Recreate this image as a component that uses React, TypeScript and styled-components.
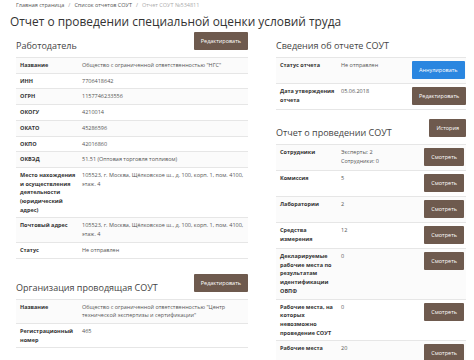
import styled, { createGlobalStyle } from 'styled-components';

const GlobalStyle = createGlobalStyle`
  body {
    margin: 0;
    background: #ffffff;
    font-family: 'Open Sans', 'Liberation Sans', sans-serif;
    color: #333;
    overflow: hidden;
  }
`;

const Page = styled.div`
  padding: 1px 8px 0 10px;
`;

const Breadcrumb = styled.div`
  display: flex;
  gap: 4px;
  padding-left: 6px;
  font-size: 5.5px;
  line-height: 8px;
  color: #999;
`;

const Crumb = styled.span<{ $active?: boolean }>`
  color: ${p => (p.$active ? '#aaa' : '#555')};
`;

const Title = styled.h1`
  margin: 5px 0 0;
  font-size: 11.9px;
  line-height: 15px;
  font-weight: 400;
  color: #333;
`;

const Columns = styled.div`
  display: grid;
  grid-template-columns: 232px 190px;
  column-gap: 28px;
  align-items: start;
  padding-left: 6px;
  margin-top: 3px;
`;

const Column = styled.div`
  display: flex;
  flex-direction: column;
`;

const Section = styled.section<{ $gap?: number }>`
  margin-top: ${p => p.$gap ?? 0}px;
`;

const SectionHeader = styled.div`
  display: flex;
  justify-content: space-between;
  align-items: flex-start;
  padding-bottom: 5px;
  min-height: 25px;
  box-sizing: border-box;
`;

const Heading = styled.h2`
  margin: 0;
  padding-top: 8px;
  font-size: 9px;
  line-height: 12px;
  font-weight: 400;
  color: #444;
`;

const Button = styled.button<{ $blue?: boolean }>`
  height: 18px;
  padding: 0 7px;
  border: none;
  border-radius: 1px;
  background: ${p => (p.$blue ? '#2a86e0' : '#6e5a4e')};
  color: #fff;
  font-family: inherit;
  font-size: 5.5px;
  white-space: nowrap;
  cursor: pointer;
`;

const Table = styled.table`
  width: 100%;
  border-collapse: collapse;
  table-layout: fixed;
  font-size: 5.5px;
  line-height: 8.7px;
  tr:nth-child(odd) {
    background: #fbfbfb;
  }
`;

const Row = styled.tr`
  border-top: 1px solid #e6e6e6;
  &:last-child {
    border-bottom: 1px solid #e6e6e6;
  }
`;

const Label = styled.th<{ $width: number }>`
  box-sizing: border-box;
  width: ${p => p.$width}px;
  padding: 3px 1px 3px 4px;
  text-align: left;
  vertical-align: top;
  font-weight: 700;
  color: #333;
`;

const Value = styled.td`
  padding: 3px 4px 3px 4px;
  vertical-align: top;
  color: #555;
`;

const ActionCell = styled.td`
  width: 52px;
  padding: 3px 2px 4px 0;
  text-align: right;
  vertical-align: top;
`;

const employer: [string, string][] = [
  ['Название', 'Общество с ограниченной ответственностью "НГС"'],
  ['ИНН', '7706418642'],
  ['ОГРН', '1157746233556'],
  ['ОКОГУ', '4210014'],
  ['ОКАТО', '45286596'],
  ['ОКПО', '42016860'],
  ['ОКВЭД', '51.51 (Оптовая торговля топливом)'],
  ['Место нахождения и осуществления деятельности (юридический адрес)', '105523, г. Москва, Щёлковское ш., д. 100, корп. 1, пом. 4100, этаж. 4'],
  ['Почтовый адрес', '105523, г. Москва, Щёлковское ш., д. 100, корп. 1, пом. 4100, этаж. 4'],
  ['Статус', 'Не отправлен'],
];

const organization: [string, string][] = [
  ['Название', 'Общество с ограниченной ответственностью "Центр технической экспертизы и сертификации"'],
  ['Регистрационный номер', '465'],
];

const results: [string, string][] = [
  ['Сотрудники', 'Эксперты: 2\nСотрудники: 0'],
  ['Комиссия', '5'],
  ['Лаборатории', '2'],
  ['Средства измерения', '12'],
  ['Декларируемые рабочие места по результатам идентификации ОВПФ', '0'],
  ['Рабочие места, на которых невозможно проведение СОУТ', '0'],
  ['Рабочие места', '20'],
];

const MultiLine = ({ text }: { text: string }) => (
  <>
    {text.split('\n').map((line, i) => (
      <div key={i}>{line}</div>
    ))}
  </>
);

const App = () => {
  return (
    <Page>
      <GlobalStyle />
      <Breadcrumb>
        <Crumb>Главная страница</Crumb>
        <span>/</span>
        <Crumb>Список отчетов СОУТ</Crumb>
        <span>/</span>
        <Crumb $active>Отчет СОУТ №534811</Crumb>
      </Breadcrumb>
      <Title>Отчет о проведении специальной оценки условий труда</Title>
      <Columns>
        <Column>
          <Section>
            <SectionHeader>
              <Heading>Работодатель</Heading>
              <Button>Редактировать</Button>
            </SectionHeader>
            <Table>
              <tbody>
                {employer.map(([label, value]) => (
                  <Row key={label}>
                    <Label $width={62}>{label}</Label>
                    <Value>{value}</Value>
                  </Row>
                ))}
              </tbody>
            </Table>
          </Section>
          <Section $gap={15}>
            <SectionHeader>
              <Heading>Организация проводящая СОУТ</Heading>
              <Button>Редактировать</Button>
            </SectionHeader>
            <Table>
              <tbody>
                {organization.map(([label, value]) => (
                  <Row key={label}>
                    <Label $width={62}>{label}</Label>
                    <Value>{value}</Value>
                  </Row>
                ))}
              </tbody>
            </Table>
          </Section>
        </Column>
        <Column>
          <Section>
            <SectionHeader>
              <Heading>Сведения об отчете СОУТ</Heading>
            </SectionHeader>
            <Table>
              <tbody>
                <Row>
                  <Label $width={61}>Статус отчета</Label>
                  <Value>Не отправлен</Value>
                  <ActionCell>
                    <Button $blue>Аннулировать</Button>
                  </ActionCell>
                </Row>
                <Row>
                  <Label $width={61}>Дата утверждения отчета</Label>
                  <Value>05.06.2018</Value>
                  <ActionCell>
                    <Button>Редактировать</Button>
                  </ActionCell>
                </Row>
              </tbody>
            </Table>
          </Section>
          <Section $gap={9}>
            <SectionHeader>
              <Heading>Отчет о проведении СОУТ</Heading>
              <Button>История</Button>
            </SectionHeader>
            <Table>
              <tbody>
                {results.map(([label, value]) => (
                  <Row key={label}>
                    <Label $width={61}>{label}</Label>
                    <Value>
                      <MultiLine text={value} />
                    </Value>
                    <ActionCell>
                      <Button>Смотреть</Button>
                    </ActionCell>
                  </Row>
                ))}
              </tbody>
            </Table>
          </Section>
        </Column>
      </Columns>
    </Page>
  );
};

export default App;
